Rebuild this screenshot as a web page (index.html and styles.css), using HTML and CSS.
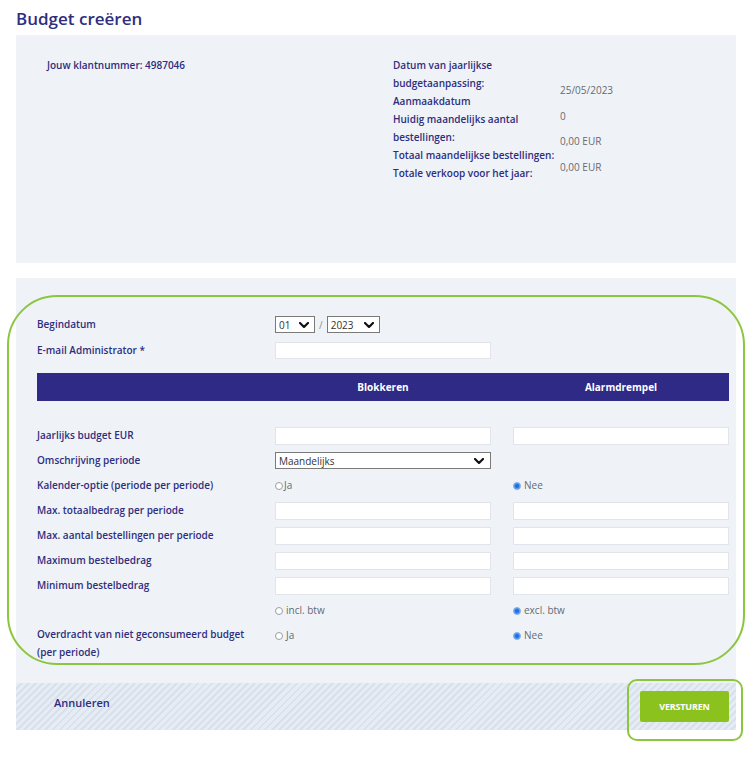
FILE: index.html
```html
<!DOCTYPE html>
<html lang="nl">
<head>
<meta charset="utf-8">
<title>Budget creëren</title>
<link rel="stylesheet" href="styles.css">
</head>
<body>
<div class="page">
  <h1 class="title">Budget creëren</h1>

  <section class="info">
    <div class="info-left">Jouw klantnummer: 4987046</div>
    <div class="info-labels">
      <div>Datum van jaarlijkse<br>budgetaanpassing:</div>
      <div>Aanmaakdatum</div>
      <div>Huidig maandelijks aantal<br>bestellingen:</div>
      <div>Totaal maandelijkse bestellingen:</div>
      <div>Totale verkoop voor het jaar:</div>
    </div>
    <div class="info-values">
      <div>25/05/2023</div>
      <div>0</div>
      <div>0,00 EUR</div>
      <div>0,00 EUR</div>
    </div>
  </section>

  <section class="form">
    <div class="form-body">
      <div class="row row-first">
        <div class="label">Begindatum</div>
        <div class="field date">
          <div class="select select-month"><span>01</span><svg class="chev" viewBox="0 0 10 6" width="10" height="6"><polyline points="1,1 5,5 9,1"/></svg></div>
          <span class="slash">/</span>
          <div class="select select-year"><span>2023</span><svg class="chev" viewBox="0 0 10 6" width="10" height="6"><polyline points="1,1 5,5 9,1"/></svg></div>
        </div>
      </div>
      <div class="row row-email">
        <div class="label">E-mail Administrator *</div>
        <div class="field"><div class="input"></div></div>
      </div>

      <div class="headbar">
        <div></div>
        <div class="head">Blokkeren</div>
        <div class="head">Alarmdrempel</div>
      </div>

      <div class="rows">
        <div class="row">
          <div class="label">Jaarlijks budget EUR</div>
          <div class="field"><div class="input"></div></div>
          <div class="field"><div class="input"></div></div>
        </div>
        <div class="row">
          <div class="label">Omschrijving periode</div>
          <div class="field"><div class="select select-wide"><span>Maandelijks</span><svg class="chev" viewBox="0 0 10 6" width="10" height="6"><polyline points="1,1 5,5 9,1"/></svg></div></div>
          <div class="field"></div>
        </div>
        <div class="row">
          <div class="label">Kalender-optie (periode per periode)</div>
          <div class="field"><span class="radio"></span><span class="rtext tight">Ja</span></div>
          <div class="field"><span class="radio on"></span><span class="rtext">Nee</span></div>
        </div>
        <div class="row">
          <div class="label">Max. totaalbedrag per periode</div>
          <div class="field"><div class="input"></div></div>
          <div class="field"><div class="input"></div></div>
        </div>
        <div class="row">
          <div class="label">Max. aantal bestellingen per periode</div>
          <div class="field"><div class="input"></div></div>
          <div class="field"><div class="input"></div></div>
        </div>
        <div class="row">
          <div class="label">Maximum bestelbedrag</div>
          <div class="field"><div class="input"></div></div>
          <div class="field"><div class="input"></div></div>
        </div>
        <div class="row">
          <div class="label">Minimum bestelbedrag</div>
          <div class="field"><div class="input"></div></div>
          <div class="field"><div class="input"></div></div>
        </div>
        <div class="row">
          <div class="label"></div>
          <div class="field"><span class="radio"></span><span class="rtext">incl. btw</span></div>
          <div class="field"><span class="radio on"></span><span class="rtext">excl. btw</span></div>
        </div>
        <div class="row row-last">
          <div class="label label-2">Overdracht van niet geconsumeerd budget<br>(per periode)</div>
          <div class="field"><span class="radio"></span><span class="rtext">Ja</span></div>
          <div class="field"><span class="radio on"></span><span class="rtext">Nee</span></div>
        </div>
      </div>
    </div>

    <div class="footer">
      <a class="cancel" href="#">Annuleren</a>
      <button class="submit" type="button">VERSTUREN</button>
    </div>
  </section>

  <div class="hl hl-form"></div>
  <div class="hl hl-btn"></div>
</div>
</body>
</html>
```

FILE: styles.css
```css
* { box-sizing: border-box; }

html, body {
  margin: 0;
  padding: 0;
  background: #ffffff;
}

body {
  font-family: "Open Sans", "Noto Sans", "Liberation Sans", sans-serif;
  font-size: 10px;
  color: #2e2d7e;
}

.page {
  position: relative;
  width: 756px;
  height: 757px;
  padding-left: 16px;
  overflow: hidden;
}

.title {
  margin: 8px 0 5px 0;
  font-size: 17px;
  line-height: 22px;
  font-weight: 600;
  color: #2f2d7e;
}

/* ---------- info panel ---------- */
.info {
  display: flex;
  width: 720px;
  height: 228px;
  padding-top: 21px;
  background: #eff3f8;
}

.info-left {
  width: 377px;
  padding-left: 31px;
  font-weight: 600;
  line-height: 18px;
  white-space: nowrap;
}

.info-labels {
  width: 167px;
  font-weight: 600;
  line-height: 18px;
  white-space: nowrap;
}

.info-values {
  margin-top: 22px;
  line-height: 25.5px;
  color: #666a70;
  white-space: nowrap;
}

/* ---------- form panel ---------- */
.form {
  width: 720px;
  margin-top: 15px;
  background: #eff3f8;
}

.form-body {
  padding: 34px 7px 22px 21px;
}

.row,
.headbar {
  display: grid;
  grid-template-columns: 216px 216px 216px;
  column-gap: 22px;
  align-items: center;
}

.row { height: 25px; }
.row-email { height: 26px; }

.label {
  font-weight: 600;
  line-height: 17px;
  white-space: nowrap;
}

.field {
  display: flex;
  align-items: center;
}

.input {
  width: 216px;
  height: 18px;
  background: #ffffff;
  border: 1px solid #e1e5eb;
}

.row-email .input { height: 17px; }

.select {
  display: flex;
  align-items: center;
  justify-content: space-between;
  height: 17px;
  padding: 0 5px 0 3px;
  background: #ffffff;
  border: 1px solid #7a7a7a;
  color: #333333;
  font-size: 10px;
}

.select-month { width: 40px; }
.select-year { width: 53px; }
.select-wide { width: 216px; padding-right: 6px; }

.chev {
  display: block;
  fill: none;
  stroke: #111111;
  stroke-width: 2.2;
  stroke-linecap: round;
  stroke-linejoin: round;
}

.slash {
  margin: 0 4px;
  color: #8a8d92;
}

.headbar {
  height: 28px;
  margin-top: 10px;
  background: #2e2a86;
  color: #ffffff;
  font-weight: 700;
}

.head { text-align: center; }

.rows { margin-top: 22px; }

.row-last {
  height: 38px;
  align-items: start;
}

.label-2 {
  margin-top: 3px;
  line-height: 17.5px;
}

.row-last .field { height: 25px; }

.radio {
  display: inline-block;
  width: 8px;
  height: 8px;
  border-radius: 50%;
  border: 1px solid #9a9da3;
  background: #ffffff;
  flex: none;
}

.radio.on {
  background: #1f6fe0;
  border: 1px solid #8db8f0;
  box-shadow: inset 0 0 0 1px #5b97ea;
}

.rtext {
  margin-left: 3px;
  color: #666a70;
  line-height: 17px;
}

.rtext.tight { margin-left: 1px; }

/* ---------- footer ---------- */
.footer {
  display: flex;
  align-items: center;
  justify-content: space-between;
  height: 47px;
  padding: 0 7px 0 38px;
  background: repeating-linear-gradient(135deg, #e6ecf4 0 3px, #d8e0ec 3px 5px);
}

.cancel {
  margin-bottom: 8px;
  font-size: 11px;
  font-weight: 600;
  color: #2e2d7e;
  text-decoration: none;
}

.submit {
  width: 89px;
  height: 31px;
  padding: 0;
  border: none;
  border-radius: 2px;
  background: #8cc21e;
  color: #ffffff;
  font-family: "Open Sans", "Noto Sans", "Liberation Sans", sans-serif;
  font-size: 9px;
  font-weight: 700;
  letter-spacing: -0.2px;
}

/* ---------- highlight annotations ---------- */
.hl {
  position: absolute;
  border: 2px solid #8cc63f;
  pointer-events: none;
}

.hl-form {
  left: 7px;
  top: 295px;
  width: 738px;
  height: 370px;
  border-radius: 50px;
}

.hl-btn {
  left: 627px;
  top: 679px;
  width: 116px;
  height: 62px;
  border-radius: 10px;
}
```
